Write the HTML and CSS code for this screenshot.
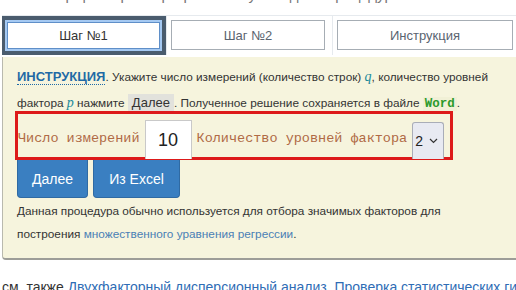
FILE: index.html
```html
<!DOCTYPE html>
<html lang="ru">
<head>
<meta charset="utf-8">
<link rel="stylesheet" href="styles.css">
</head>
<body>
<div class="page">
  <p class="cut">Отбор факторов в регрессионную модель процедурой</p>
  <div class="tabs">
    <div class="tab-cell active"><div class="tab">Шаг №1</div></div>
    <div class="tab-cell"><div class="tab">Шаг №2</div></div>
    <div class="tab-cell"><div class="tab">Инструкция</div></div>
  </div>
  <div class="panel">
    <p class="intro"><span class="title">ИНСТРУКЦИЯ</span>. Укажите число измерений (количество строк) <i class="var">q</i>, количество уровней<br>фактора <i class="var">p</i> нажмите <span class="kbd">Далее</span>. Полученное решение сохраняется в файле <span class="word">Word</span>.</p>
    <div class="form-row">
      <span class="label">Число измерений</span>
      <div class="num">10</div>
      <span class="label">Количество уровней фактора</span>
      <div class="select"><span>2</span><svg class="chev" width="9" height="6" viewBox="0 0 9 6"><path d="M1 1 L4.5 4.5 L8 1" fill="none" stroke="#333" stroke-width="1.2"/></svg></div>
    </div>
    <div class="buttons">
      <div class="btn">Далее</div>
      <div class="btn">Из Excel</div>
    </div>
    <p class="note">Данная процедура обычно используется для отбора значимых факторов для<br>построения <span class="link">множественного уравнения регрессии</span>.</p>
  </div>
  <p class="see">см. также <span class="ulink">Двухфакторный дисперсионный анализ</span>, <span class="ulink">Проверка статистических гипотез</span></p>
</div>
</body>
</html>
```

FILE: styles.css
```css
html, body {
  margin: 0;
  padding: 0;
  background: #fff;
  overflow: hidden;
}
body {
  width: 516px;
  height: 290px;
  font-family: "Liberation Sans", Arial, sans-serif;
  color: #333;
}
.page {
  width: 540px;
}
.cut {
  margin: -15px 0 0 30px;
  font-size: 15px;
  line-height: 20px;
  color: #777;
  white-space: nowrap;
}
.tabs {
  display: grid;
  grid-template-columns: 164px 166px 200px;
  margin: 10px 0 0 2px;
  height: 40px;
  border-top: 1px solid #e6eaee;
  box-sizing: border-box;
}
.tab-cell {
  padding: 4px 7px 5px 4px;
  border-left: 1px solid #e6eaee;
  box-sizing: border-box;
}
.tab-cell:last-child {
  padding-right: 19px;
}
.tab-cell.active {
  background: #4a5c6e;
  border-left: none;
  padding: 4px 4px 4px 3px;
}
.tab {
  height: 30px;
  box-sizing: border-box;
  border: 1px solid #a6adb4;
  background: #fff;
  display: flex;
  align-items: center;
  justify-content: center;
  font-size: 13px;
  color: #5a6470;
}
.active .tab {
  height: 31px;
  border: 2px solid #a5c9f2;
  box-shadow: inset 0 0 0 1px #5f8fc8;
  color: #333;
}
.panel {
  margin: 2px 0 0 2px;
  background: #f6f4dd;
  border-left: 1px solid #b9b9ae;
  border-bottom: 2px solid #9d9d98;
  border-bottom-left-radius: 4px;
  padding: 7px 0 10px 14px;
  height: 184px;
}
.intro {
  margin: 0;
  font-size: 11.8px;
  line-height: 26px;
  white-space: nowrap;
}
.title {
  font-weight: bold;
  color: #1f6aa5;
  font-size: 13px;
  border-bottom: 1px dotted #1f6aa5;
}
.var {
  color: #1a8a9a;
  font-family: "Liberation Serif", serif;
  font-size: 14px;
}
.kbd {
  background: #e2e2dc;
  padding: 1px 4px;
  color: #333;
  font-size: 13px;
}
.word {
  font-family: "Liberation Mono", monospace;
  font-weight: bold;
  color: #2b9a2b;
  background: #f1f0d6;
  font-size: 12.5px;
  padding: 0 2px;
}
.form-row {
  margin: -6px 0 0 -2px;
  width: 438px;
  height: 49px;
  box-sizing: border-box;
  border: 3px solid #dd1a1a;
  display: flex;
  align-items: flex-end;
  gap: 5px;
  position: relative;
}
.label {
  font-family: "Liberation Mono", monospace;
  font-size: 13.5px;
  color: #b06a45;
  align-self: center;
  margin-top: 6px;
  white-space: nowrap;
}
.num {
  width: 47px;
  height: 39px;
  margin-bottom: -2px;
  box-sizing: border-box;
  border: 1px solid #c9c9c9;
  border-bottom: none;
  background: #fff;
  display: flex;
  align-items: center;
  justify-content: center;
  font-size: 18px;
  color: #222;
}
.select {
  width: 32px;
  height: 37px;
  margin-bottom: -2px;
  box-sizing: border-box;
  border: 1px solid #a9adb8;
  border-bottom: none;
  border-radius: 3px 3px 0 0;
  background: #e8eaf2;
  display: flex;
  align-items: center;
  justify-content: space-between;
  padding: 0 5px 0 2px;
  font-size: 14px;
  color: #222;
}
.buttons {
  display: flex;
  gap: 5px;
}
.btn {
  height: 38px;
  box-sizing: border-box;
  background: #3a7fc1;
  border: 1px solid #2f6aa3;
  border-top: none;
  border-radius: 0 0 4px 4px;
  color: #fff;
  font-size: 14px;
  display: flex;
  align-items: center;
  justify-content: center;
}
.btn:first-child { width: 71px; }
.btn:last-child { width: 87px; }
.note {
  margin: 2px 0 0 0;
  font-size: 11.8px;
  line-height: 23px;
  white-space: nowrap;
}
.link {
  color: #4a80b5;
}
.see {
  margin: 18px 0 0 2px;
  font-size: 14px;
  line-height: 18px;
  color: #333;
  white-space: nowrap;
}
.ulink {
  color: #2f6db5;
  text-decoration: underline;
}
```
